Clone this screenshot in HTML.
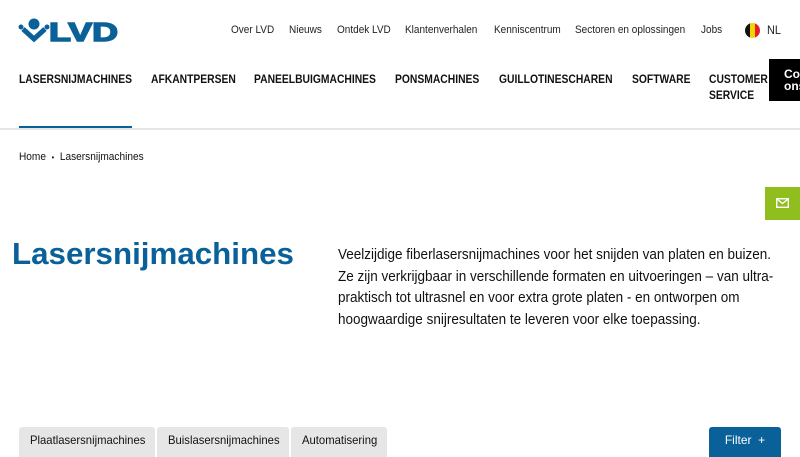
<!DOCTYPE html>
<html><head><meta charset="utf-8"><style>
body{margin:0;width:800px;height:450px;overflow:hidden;background:#fff;font-family:"Liberation Sans",sans-serif;color:#111;position:relative}
.a{position:absolute;white-space:nowrap;transform-origin:0 0}
.top{font-size:11px;top:24px;color:#222;transform:scaleX(0.91)}
.nav{font-size:12px;font-weight:bold;top:72px;color:#111;transform:scaleX(0.86)}
.tab{position:absolute;top:427px;height:30px;background:#e6e6e6;font-size:12px;line-height:27px;border-radius:3px 3px 0 0;box-sizing:border-box}
.tab span{display:inline-block;transform:scaleX(0.94);transform-origin:0 0;margin-left:11px;white-space:nowrap}
</style></head><body>
<svg class="a" style="left:18px;top:16px" width="104" height="27" viewBox="0 0 104 27">
<circle cx="16" cy="8" r="5.5" fill="#0a6199"/>
<path d="M5 13 L16 23 L27 13" stroke="#0a6199" stroke-width="5" fill="none"/>
<circle cx="3" cy="11" r="2.5" fill="#0a6199"/><circle cx="29" cy="11" r="2.5" fill="#0a6199"/>
<text x="31" y="25" font-family="Liberation Sans" font-weight="bold" font-size="26" fill="#0a6199" stroke="#0a6199" stroke-width="1.5" textLength="69" lengthAdjust="spacingAndGlyphs">LVD</text>
</svg>
<div class="a top" style="left:231px">Over LVD</div>
<div class="a top" style="left:289px">Nieuws</div>
<div class="a top" style="left:337px">Ontdek LVD</div>
<div class="a top" style="left:405px">Klantenverhalen</div>
<div class="a top" style="left:494px">Kenniscentrum</div>
<div class="a top" style="left:575px">Sectoren en oplossingen</div>
<div class="a top" style="left:701px">Jobs</div>
<div class="a" style="left:745px;top:23px;width:15px;height:15px;border-radius:50%;overflow:hidden;display:flex"><span style="flex:1;background:#111"></span><span style="flex:1;background:#f5d300"></span><span style="flex:1;background:#e3202a"></span></div>
<div class="a top" style="left:767px;font-size:12px;top:23px">NL</div>
<div class="a nav" style="left:19px">LASERSNIJMACHINES</div>
<div class="a nav" style="left:151px">AFKANTPERSEN</div>
<div class="a nav" style="left:254px">PANEELBUIGMACHINES</div>
<div class="a nav" style="left:395px">PONSMACHINES</div>
<div class="a nav" style="left:499px">GUILLOTINESCHAREN</div>
<div class="a nav" style="left:632px">SOFTWARE</div>
<div class="a nav" style="left:709px;line-height:16px;top:71px">CUSTOMER<br>SERVICE</div>
<div class="a" style="left:769px;top:59px;width:40px;height:42px;background:#000;color:#fff;font-size:12px;font-weight:bold;line-height:12px;padding:9px 0 0 15px;box-sizing:border-box">Co<br>ons</div>
<div class="a" style="left:19px;top:126px;width:113px;height:3px;background:#0a6199"></div>
<div class="a" style="left:0;top:128px;width:800px;height:2px;background:#e5e5e5"></div>
<div class="a" style="left:19px;top:151px;font-size:11px;transform:scaleX(0.92)">Home &nbsp;<span style="font-size:8px">•</span>&nbsp; Lasersnijmachines</div>
<div class="a" style="left:765px;top:187px;width:35px;height:33px;background:#8fbe1e"></div>
<svg class="a" style="left:776px;top:198px" width="13" height="10"><rect x="0.7" y="0.7" width="11.6" height="8.6" fill="none" stroke="#fff" stroke-width="1.4"/><path d="M1 1 L6.5 5.5 L12 1" fill="none" stroke="#fff" stroke-width="1.4"/></svg>
<div class="a" style="left:12px;top:236px;font-size:31px;font-weight:bold;color:#0a6199;transform:scaleX(1.01)">Lasersnijmachines</div>
<div class="a" style="left:338px;top:244px;font-size:15px;line-height:21.5px;color:#111;transform:scaleX(0.9)">Veelzijdige fiberlasersnijmachines voor het snijden van platen en buizen.<br>Ze zijn verkrijgbaar in verschillende formaten en uitvoeringen – van ultra-<br>praktisch tot ultrasnel en voor extra grote platen - en ontworpen om<br>hoogwaardige snijresultaten te leveren voor elke toepassing.</div>
<div class="tab" style="left:19px;width:136px"><span>Plaatlasersnijmachines</span></div>
<div class="tab" style="left:157px;width:132px"><span>Buislasersnijmachines</span></div>
<div class="tab" style="left:291px;width:96px"><span>Automatisering</span></div>
<div class="a" style="left:709px;top:427px;width:72px;height:30px;background:#0a6199;color:#fff;font-size:12px;line-height:26px;text-align:center;border-radius:3px 3px 0 0">Filter &nbsp;+</div>
</body></html>
